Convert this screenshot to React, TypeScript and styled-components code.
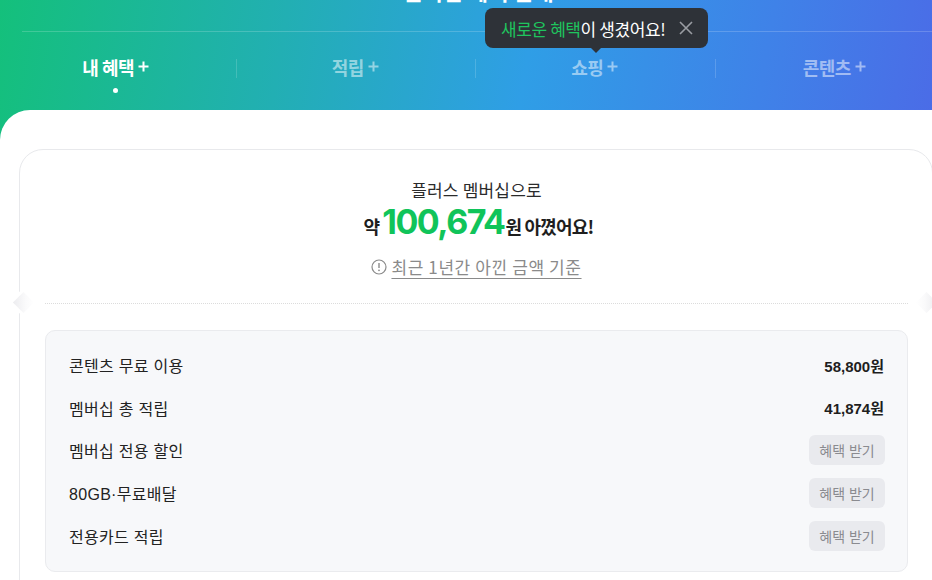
import React from "react";
import styled, { createGlobalStyle } from "styled-components";

const Global = createGlobalStyle`
  html, body { margin: 0; padding: 0; background: #fff; overflow: hidden; }
  body { font-family: "Liberation Sans", "Noto Sans CJK KR", sans-serif; }
  * { box-sizing: border-box; }
`;

const Page = styled.div`
  width: 932px;
  height: 580px;
  overflow: hidden;
  background: linear-gradient(100deg, #14c07b 0%, #22afb3 28%, #2f9ee6 52%, #3f82e8 75%, #5062e6 100%);
  display: flex;
  flex-direction: column;
`;

const Header = styled.header`
  position: relative;
  height: 110px;
  flex-shrink: 0;
  display: flex;
  flex-direction: column;
`;

const Title = styled.h1`
  margin: -25px 0 0;
  height: 30px;
  text-align: center;
  padding-left: 24px;
  color: #fff;
  font-family: "Noto Sans CJK KR", sans-serif;
  font-size: 22px;
  font-weight: 700;
  line-height: 30px;
`;

const Divider = styled.div`
  margin: 26px 0 0 22px;
  height: 1px;
  background: rgba(255, 255, 255, 0.18);
`;

const Tabs = styled.nav`
  margin-left: -4px;
  width: 958px;
  display: grid;
  grid-template-columns: repeat(4, 1fr);
  margin-top: 24px;
`;

const Tab = styled.div<{ $active?: boolean; $first?: boolean }>`
  position: relative;
  height: 48px;
  display: flex;
  flex-direction: column;
  align-items: center;
  color: ${(p) => (p.$active ? "#fff" : "rgba(255,255,255,0.5)")};
  &::before {
    content: "";
    display: ${(p) => (p.$first ? "none" : "block")};
    position: absolute;
    left: 0;
    top: 3px;
    width: 1px;
    height: 19px;
    background: rgba(255, 255, 255, 0.16);
  }
`;

const TabLabel = styled.div`
  display: flex;
  align-items: flex-start;
  gap: 4px;
  font-family: "Noto Sans CJK KR", sans-serif;
  font-size: 18px;
  font-weight: 700;
  line-height: 24px;
  letter-spacing: -0.5px;
  margin-top: -1px;
`;

const Plus = styled.svg`
  margin-top: 6px;
`;

const Dot = styled.span`
  width: 5px;
  height: 5px;
  border-radius: 50%;
  background: #fff;
  margin-top: 9px;
`;

const Tooltip = styled.div`
  position: absolute;
  left: 485px;
  top: 8px;
  width: 223px;
  height: 40px;
  border-radius: 8px;
  background: #2e3238;
  display: flex;
  align-items: center;
  padding: 0 0 0 16px;
  gap: 14px;
  font-family: "Noto Sans CJK KR", sans-serif;
  font-size: 17px;
  color: #fff;
  letter-spacing: -0.4px;
  &::after {
    content: "";
    position: absolute;
    left: 105px;
    bottom: -5px;
    border-left: 6px solid transparent;
    border-right: 6px solid transparent;
    border-top: 6px solid #2e3238;
  }
`;

const Green = styled.span`
  color: #1fc45e;
`;

const CloseIcon = styled.svg`
  flex-shrink: 0;
`;

const Body = styled.main`
  flex: 1;
  background: #fff;
  border-top-left-radius: 30px;
  padding: 39px 0 0 19px;
`;

const Card = styled.section`
  position: relative;
  width: 914px;
  height: 460px;
  border: 1px solid #e8e9ec;
  border-radius: 24px;
  padding: 28px 24px 0 25px;
  display: flex;
  flex-direction: column;
  align-items: stretch;
`;

const Notch = styled.span<{ $side: "left" | "right" }>`
  position: absolute;
  top: 145px;
  ${(p) => (p.$side === "left" ? "left: -4px;" : "right: -2px;")}
  width: 15px;
  height: 15px;
  transform: rotate(45deg);
  background: ${(p) =>
    p.$side === "left"
      ? "linear-gradient(45deg, #ececef 0%, #fafafb 60%, #fff 100%)"
      : "linear-gradient(225deg, #ececef 0%, #fafafb 60%, #fff 100%)"};
  box-shadow: 0 0 0 3px #fff;
`;

const Lead = styled.p`
  margin: 0;
  text-align: center;
  font-family: "Noto Sans CJK KR", sans-serif;
  font-size: 17px;
  line-height: 24px;
  color: #2b2b2b;
  letter-spacing: 0.2px;
`;

const Saved = styled.p`
  margin: 0;
  display: flex;
  justify-content: center;
  align-items: baseline;
  font-family: "Noto Sans CJK KR", sans-serif;
  font-size: 18px;
  font-weight: 700;
  color: #1e1e1e;
  letter-spacing: -0.8px;
  line-height: 40px;
  height: 40px;
  padding-left: 4px;
`;

const Amount = styled.span`
  font-family: "Inter", "Noto Sans", sans-serif;
  font-size: 34px;
  font-weight: 700;
  color: #10c45a;
  letter-spacing: -1.5px;
  margin: 0 1px 0 3px;
`;

const Basis = styled.p`
  margin: 14px 0 0;
  display: flex;
  justify-content: center;
  align-items: center;
  gap: 4px;
  font-family: "Noto Sans CJK KR", sans-serif;
  font-size: 17px;
  line-height: 22px;
  color: #8a8a8a;
`;

const BasisLink = styled.span`
  text-decoration: underline;
  text-underline-offset: 4px;
  letter-spacing: 0.6px;
`;

const DottedLine = styled.hr`
  margin: 25px 0 0;
  border: none;
  border-top: 1px dotted #dcdcdc;
  height: 0;
`;

const Summary = styled.div`
  margin-top: 26px;
  height: 242px;
  background: #f7f8fa;
  border: 1px solid #eaebee;
  border-radius: 10px;
  padding: 13px 23px 0 23px;
  display: flex;
  flex-direction: column;
`;

const Row = styled.div`
  height: 42.6px;
  display: flex;
  align-items: center;
  justify-content: space-between;
`;

const Label = styled.span`
  font-family: "Liberation Sans", "Noto Sans CJK KR", sans-serif;
  font-size: 16px;
  color: #222;
  letter-spacing: 0.3px;
`;

const Value = styled.span`
  font-family: "Liberation Sans", "Noto Sans CJK KR", sans-serif;
  font-size: 15px;
  font-weight: 700;
  color: #1e1e1e;
`;

const Action = styled.button`
  width: 76px;
  height: 30px;
  border: none;
  border-radius: 6px;
  background: #e9eaee;
  color: #8a8b90;
  font-family: "Liberation Sans", "Noto Sans CJK KR", sans-serif;
  font-size: 14px;
  padding: 0;
  margin-right: -1px;
`;

const tabs = ["내 혜택", "적립", "쇼핑", "콘텐츠"];

const rows: { label: string; value?: string }[] = [
  { label: "콘텐츠 무료 이용", value: "58,800원" },
  { label: "멤버십 총 적립", value: "41,874원" },
  { label: "멤버십 전용 할인" },
  { label: "80GB·무료배달" },
  { label: "전용카드 적립" },
];

export default function App() {
  return (
    <>
      <Global />
      <Page>
        <Header>
          <Title>멤버십 혜택 안내</Title>
          <Divider />
          <Tabs>
            {tabs.map((t, i) => (
              <Tab key={t} $active={i === 0} $first={i === 0}>
                <TabLabel>
                  {t}
                  <Plus width="11" height="11" viewBox="0 0 11 11">
                    <path d="M5.5 0.5v10M0.5 5.5h10" stroke="currentColor" strokeWidth="2" />
                  </Plus>
                </TabLabel>
                {i === 0 && <Dot />}
              </Tab>
            ))}
          </Tabs>
          <Tooltip>
            <span>
              <Green>새로운 혜택</Green>이 생겼어요!
            </span>
            <CloseIcon width="14" height="14" viewBox="0 0 14 14">
              <path d="M1 1l12 12M13 1L1 13" stroke="#9a9da3" strokeWidth="1.6" />
            </CloseIcon>
          </Tooltip>
        </Header>
        <Body>
          <Card>
            <Notch $side="left" />
            <Notch $side="right" />
            <Lead>플러스 멤버십으로</Lead>
            <Saved>
              약<Amount>100,674</Amount>원 아꼈어요!
            </Saved>
            <Basis>
              <svg width="16" height="16" viewBox="0 0 16 16">
                <circle cx="8" cy="8" r="7" fill="none" stroke="#8a8a8a" strokeWidth="1.2" />
                <path d="M8 4v5" stroke="#8a8a8a" strokeWidth="1.4" />
                <circle cx="8" cy="11.3" r="0.9" fill="#8a8a8a" />
              </svg>
              <BasisLink>최근 1년간 아낀 금액 기준</BasisLink>
            </Basis>
            <DottedLine />
            <Summary>
              {rows.map((r) => (
                <Row key={r.label}>
                  <Label>{r.label}</Label>
                  {r.value ? <Value>{r.value}</Value> : <Action>혜택 받기</Action>}
                </Row>
              ))}
            </Summary>
          </Card>
        </Body>
      </Page>
    </>
  );
}
